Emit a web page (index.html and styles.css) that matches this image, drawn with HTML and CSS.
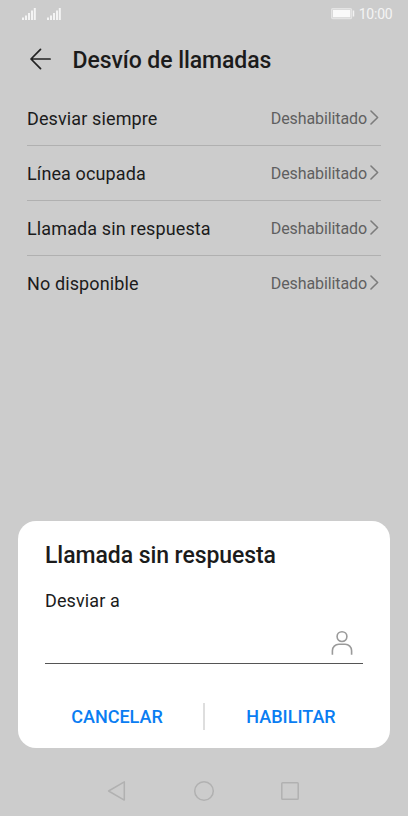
FILE: index.html
```html
<!DOCTYPE html>
<html lang="es">
<head>
    <meta charset="UTF-8">
    <meta name="viewport" content="width=device-width, initial-scale=1.0">
    <title>Desvío de llamadas</title>
    <link rel="stylesheet" href="styles.css">
</head>
<body>
    <div class="status-bar">
        <div class="signals">
            <svg class="signal" width="14" height="14" viewBox="0 0 14 14">
                <path d="M0 10.5h2V13H0zM3 8.5h2V13H3zM6 6h2v7H6zM9 3.5h2V13H9zM11.8 1h2v12h-2z"/>
            </svg>
            <svg class="signal" width="14" height="14" viewBox="0 0 14 14">
                <path d="M0 10.5h2V13H0zM3 8.5h2V13H3zM6 6h2v7H6zM9 3.5h2V13H9zM11.8 1h2v12h-2z"/>
            </svg>
        </div>
        <div class="status-right">
            <svg width="24" height="12" viewBox="0 0 24 12">
                <rect x="0.6" y="0.6" width="20" height="10" rx="1.2" fill="#d8d8d8" stroke="#e4e4e4" stroke-width="1.2"/>
                <rect x="2" y="2" width="17.2" height="7.2" fill="#fafafa"/>
                <rect x="21.8" y="2.5" width="1.4" height="6" fill="#f2f2f2"/>
            </svg>
            <span class="time">10:00</span>
        </div>
    </div>
    <div class="header">
        <svg class="back" width="22" height="22" viewBox="0 0 22 22">
            <path d="M10.5 1.3L1 11l9.5 9.7M1.2 11h18.9"/>
        </svg>
        <h1>Desvío de llamadas</h1>
    </div>
    <div class="list">
        <div class="row">
            <span class="label">Desviar siempre</span>
            <span class="value">Deshabilitado</span>
            <svg class="chevron" width="9" height="16" viewBox="0 0 9 16"><path d="M1 1L7.6 7.5 1 14"/></svg>
        </div>
        <div class="row">
            <span class="label">Línea ocupada</span>
            <span class="value">Deshabilitado</span>
            <svg class="chevron" width="9" height="16" viewBox="0 0 9 16"><path d="M1 1L7.6 7.5 1 14"/></svg>
        </div>
        <div class="row">
            <span class="label">Llamada sin respuesta</span>
            <span class="value">Deshabilitado</span>
            <svg class="chevron" width="9" height="16" viewBox="0 0 9 16"><path d="M1 1L7.6 7.5 1 14"/></svg>
        </div>
        <div class="row">
            <span class="label">No disponible</span>
            <span class="value">Deshabilitado</span>
            <svg class="chevron" width="9" height="16" viewBox="0 0 9 16"><path d="M1 1L7.6 7.5 1 14"/></svg>
        </div>
    </div>

    <div class="dialog">
        <h2>Llamada sin respuesta</h2>
        <label for="number">Desviar a</label>
        <div class="field">
            <input type="tel" id="number">
            <svg class="contact" width="22" height="26" viewBox="0 0 22 26">
                <circle cx="11" cy="6.6" r="4.9"/>
                <path d="M1.4 24.8v-4.1a6.4 6.4 0 0 1 6.4-6.4h6.4a6.4 6.4 0 0 1 6.4 6.4v4.1"/>
            </svg>
        </div>
        <div class="buttons">
            <button>CANCELAR</button>
            <span class="divider"></span>
            <button>HABILITAR</button>
        </div>
    </div>

    <div class="nav-bar">
        <svg width="22" height="22" viewBox="0 0 22 22"><path d="M17.3 1.9v18.2L1.6 11z"/></svg>
        <svg width="22" height="22" viewBox="0 0 22 22"><circle cx="11" cy="11" r="9.3"/></svg>
        <svg width="22" height="22" viewBox="0 0 22 22"><rect x="2.8" y="2.8" width="16.4" height="16.4" rx="0.8"/></svg>
    </div>
</body>
</html>
```

FILE: styles.css
```css
* {
    box-sizing: border-box;
}
body {
    margin: 0;
    height: 816px;
    position: relative;
    display: flex;
    flex-direction: column;
    overflow: hidden;
    background: #ccc;
    color: #1b1b1b;
    font-family: Roboto, "Liberation Sans", sans-serif;
}
svg {
    display: block;
    flex-shrink: 0;
}
.status-bar {
    height: 28px;
    padding: 0 15.5px 0 22px;
    display: flex;
    align-items: center;
    justify-content: space-between;
}
.signals {
    display: flex;
    gap: 10.5px;
}
.signal {
    fill: #f4f4f4;
}
.status-right {
    display: flex;
    align-items: center;
    gap: 4px;
}
.time {
    font-size: 14px;
    letter-spacing: -0.2px;
    line-height: 28px;
    color: #f4f4f4;
}
.header {
    height: 63px;
    padding: 0 30px;
    display: flex;
    align-items: center;
    gap: 20.5px;
}
.back {
    margin-bottom: 1px;
    fill: none;
    stroke: #222;
    stroke-width: 1.7;
    stroke-linecap: round;
    stroke-linejoin: round;
}
h1,
h2 {
    margin: 0;
    font-size: 23px;
    font-weight: 500;
    letter-spacing: -0.07px;
    white-space: nowrap;
}
h1 {
    padding-top: 2px;
}
.list {
    padding: 0 27px;
}
.row {
    height: 55px;
    display: flex;
    align-items: center;
    padding-right: 2px;
    border-bottom: 1px solid #b0b0b0;
}
.row:last-child {
    border-bottom-color: transparent;
}
.label {
    flex-grow: 1;
    font-size: 18px;
    letter-spacing: 0.12px;
}
.value {
    font-size: 16px;
    letter-spacing: -0.1px;
    color: #5f5f5f;
    margin-right: 3px;
}
.chevron {
    fill: none;
    stroke: #7c7c7c;
    stroke-width: 1.6;
    stroke-linecap: round;
    stroke-linejoin: round;
}
.dialog {
    position: absolute;
    left: 18px;
    right: 18px;
    bottom: 68px;
    height: 227.5px;
    padding: 21.5px 27px 0;
    display: flex;
    flex-direction: column;
    background: #fff;
    border-radius: 18px;
}
h2 {
    line-height: 28px;
}
label {
    margin-top: 19px;
    font-size: 18px;
    line-height: 24px;
    letter-spacing: 0.12px;
}
.field {
    height: 51px;
    padding: 0 10px 7px 0;
    display: flex;
    align-items: flex-end;
    border-bottom: 1px solid #555;
}
.field input {
    flex-grow: 1;
    border: none;
    outline: none;
    background: none;
    font-size: 18px;
}
.contact {
    fill: none;
    stroke: #9a9a9a;
    stroke-width: 1.6;
}
.buttons {
    margin: 38px -14px 0;
    display: flex;
    align-items: center;
}
.buttons button {
    flex: 1;
    height: 28px;
    padding: 0;
    border: none;
    background: none;
    font-family: inherit;
    font-size: 18px;
    font-weight: 500;
    color: #0a7df2;
}
.divider {
    width: 2px;
    height: 27px;
    background: #dedede;
}
.nav-bar {
    height: 50px;
    margin-top: auto;
    padding: 0 107px;
    display: flex;
    align-items: center;
    justify-content: space-between;
}
.nav-bar svg {
    fill: none;
    stroke: #b1b1b1;
    stroke-width: 1.5;
    stroke-linejoin: round;
}
```
